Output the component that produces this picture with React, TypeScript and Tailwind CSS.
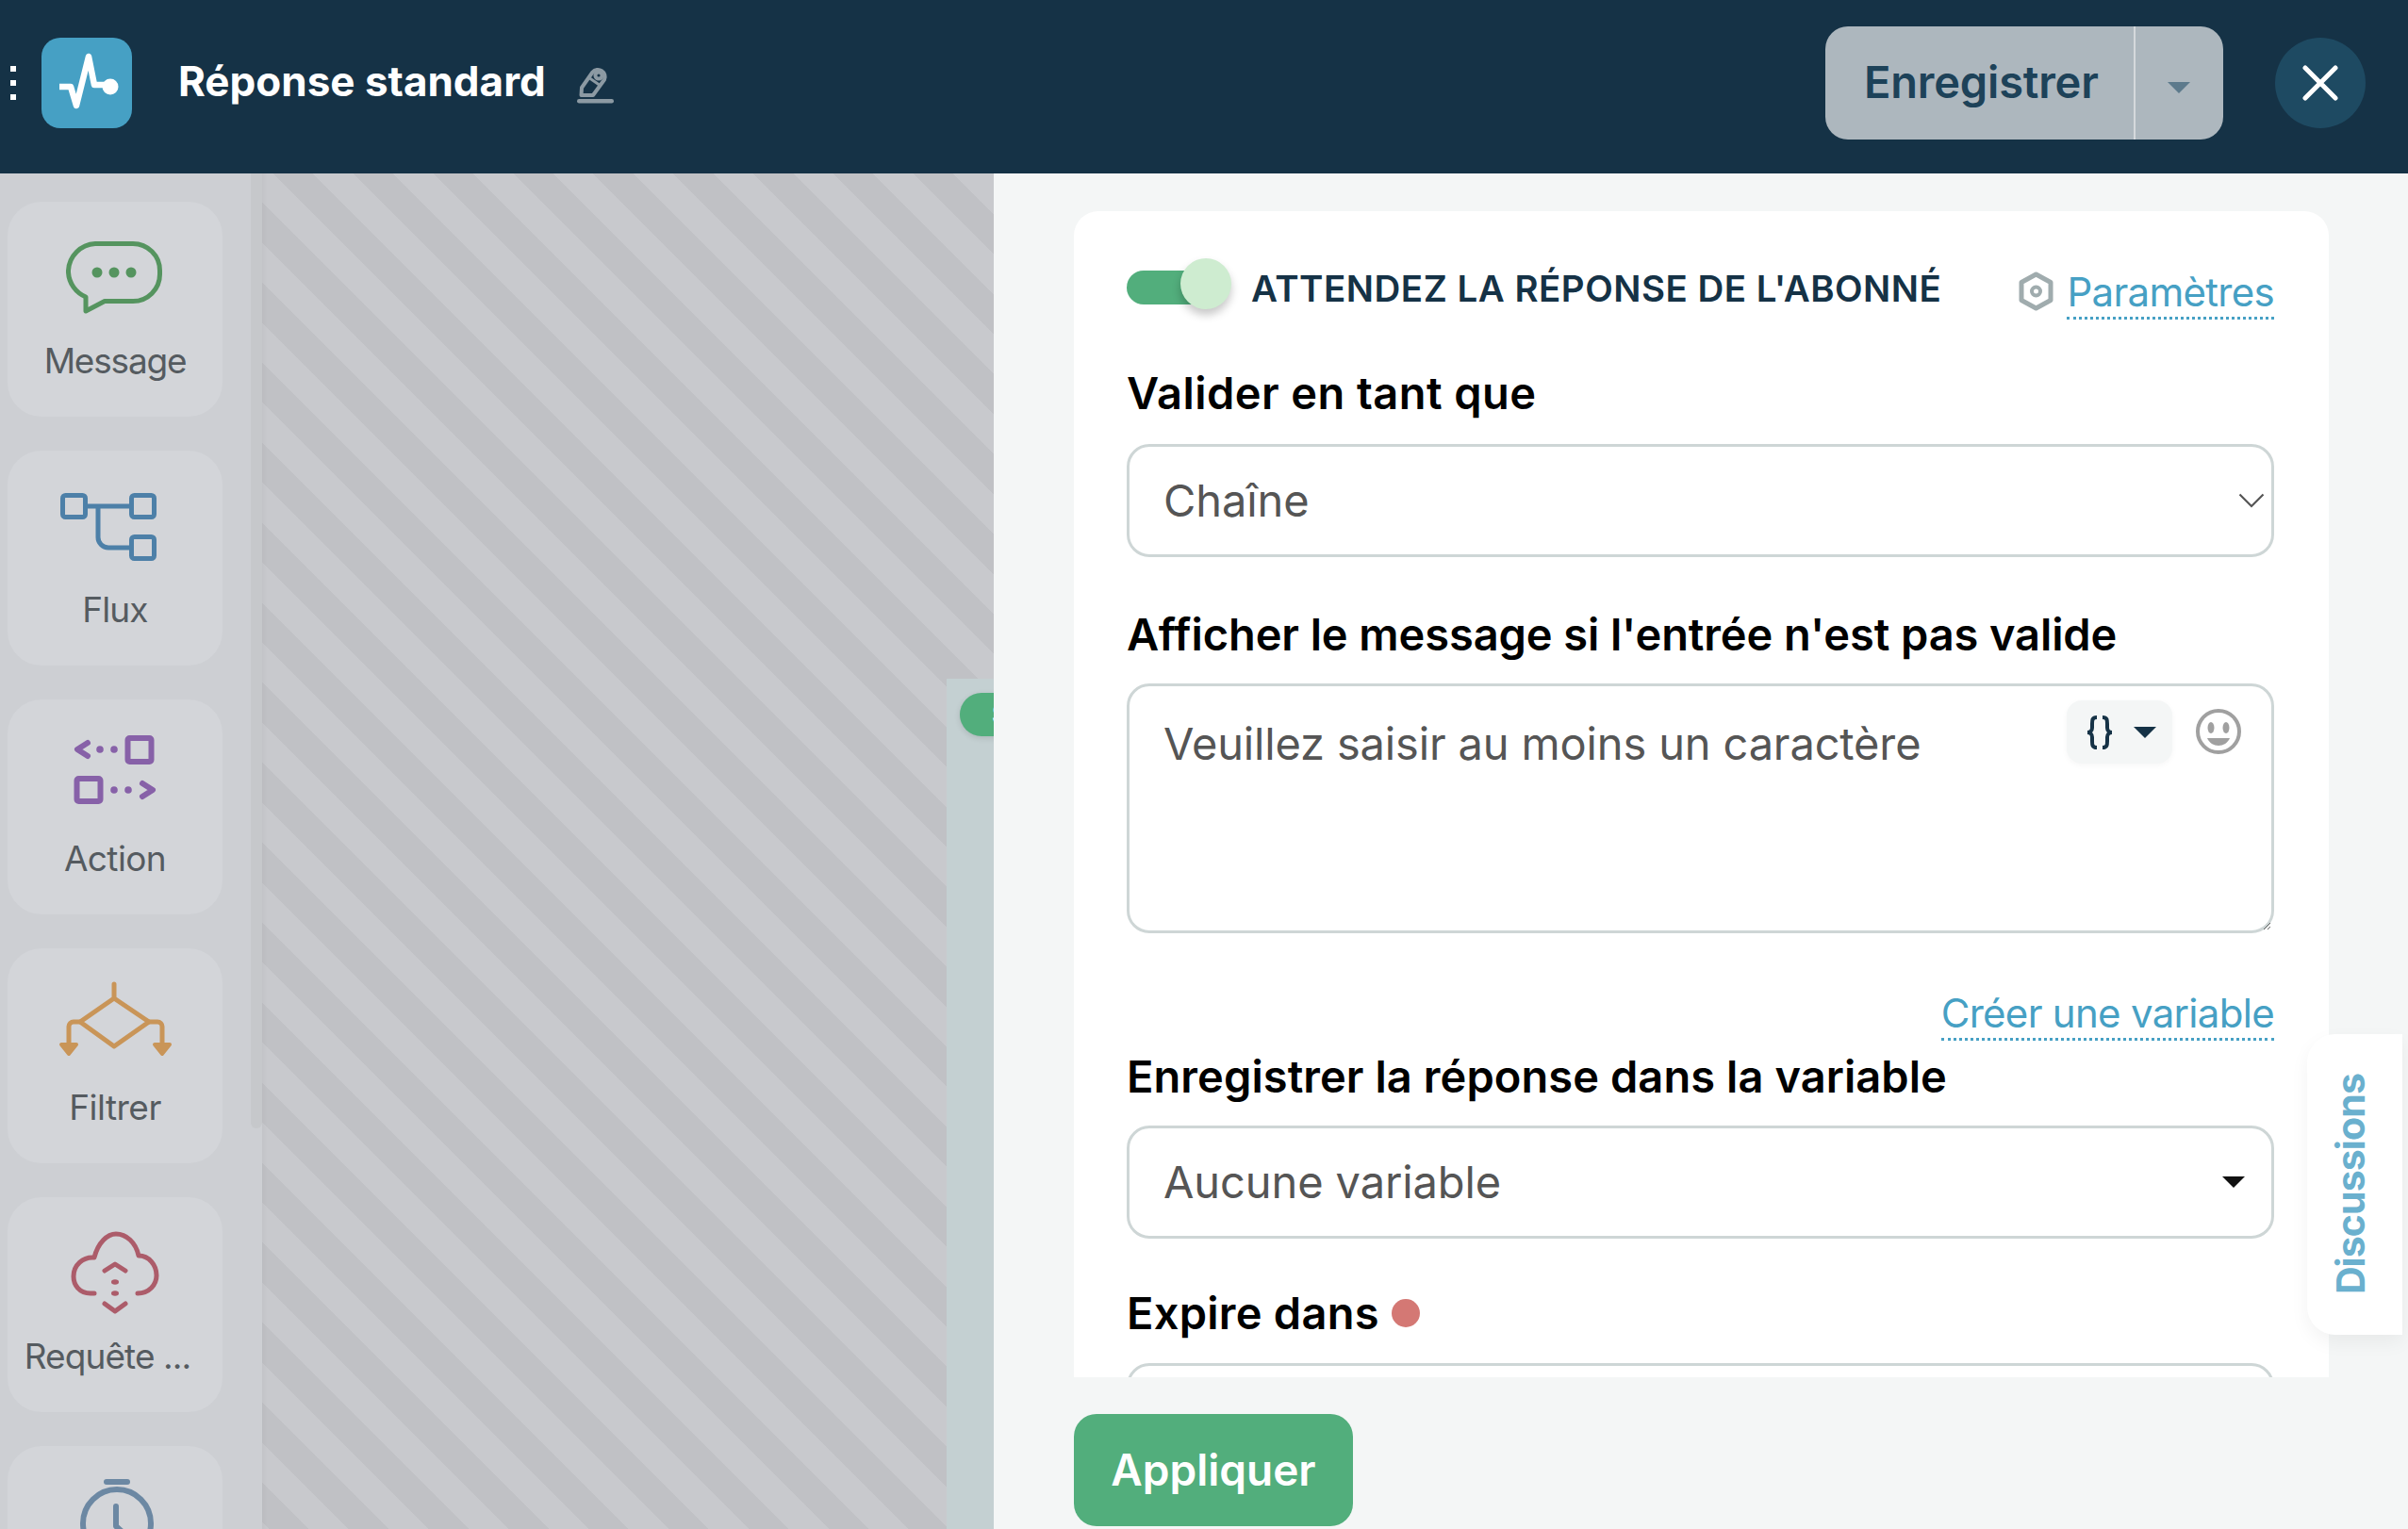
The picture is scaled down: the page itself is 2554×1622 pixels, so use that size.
import React from "react";

const font = { fontFamily: "Inter, 'Liberation Sans', sans-serif" };

function Cardicon({ children, label, labelClass }: { children: React.ReactNode; label?: string; labelClass?: string }) {
  return (
    <div className="w-[228px] h-[228px] shrink-0 rounded-[36px] bg-[#d3d5d9] flex flex-col items-center">
      <svg width="228" height="140" viewBox="0 0 228 140" fill="none" className="block shrink-0">
        {children}
      </svg>
      {label ? <div className={"h-[58px] leading-[58px] text-[37px] text-[#555b60] " + (labelClass || "tracking-[-0.9px]")}>{label}</div> : null}
    </div>
  );
}

const FieldLabel = ({ children, className }: { children: React.ReactNode; className?: string }) => (
  <div className={"h-[60px] leading-[60px] text-[47px] font-semibold text-black whitespace-nowrap " + (className || "")}>{children}</div>
);

const boxCls = "w-full h-[120px] border-[3px] border-[#ced6d6] rounded-[24px] bg-white flex items-center justify-between pl-[36px] pr-[24px] text-[47px] text-[#555555] tracking-[-0.1px]";

export default function App() {
  return (
    <div style={font} className="w-[2554px] h-[1622px] overflow-hidden flex flex-col bg-white">
      <header className="h-[184px] shrink-0 bg-[#153246] flex items-center relative">
        <div className="w-[44px] flex flex-col items-center gap-[9px] -mt-[8px] shrink-0 pr-[16px]">
          <span className="w-[6px] h-[6px] bg-white"></span>
          <span className="w-[6px] h-[6px] bg-white"></span>
          <span className="w-[6px] h-[6px] bg-white"></span>
        </div>
        <div className="w-[96px] h-[96px] rounded-[20px] bg-[#46a0c4] -mt-[8px] shrink-0">
          <svg width="96" height="96" viewBox="0 0 96 96" fill="none">
            <path d="M19 52H31L37 72L50 20L56 50H73" stroke="#fff" strokeWidth="6.5" strokeLinejoin="round" />
            <circle cx="73" cy="52" r="8.5" fill="#fff" />
          </svg>
        </div>
        <div className="ml-[49px] w-[389px] text-[44px] font-bold text-white tracking-[0px] -mt-[12px] whitespace-nowrap">Réponse standard</div>
        <svg width="39" height="40" viewBox="0 0 39 40" fill="none" className="ml-[34px] -mt-[4px] shrink-0">
          <path d="M4.5 31L5 23L16.5 6.5A7.5 7.5 0 0 1 29 14.5L17 31Z" stroke="#8c9aa3" strokeWidth="4" strokeLinejoin="round" />
          <circle cx="23" cy="10" r="3.6" stroke="#8c9aa3" strokeWidth="4" />
          <path d="M13.5 13L25 21" stroke="#8c9aa3" strokeWidth="3" />
          <rect x="0" y="35" width="39" height="4.5" rx="2.2" fill="#8c9aa3" />
        </svg>
        <div className="ml-auto flex items-center shrink-0 -mt-[8px] pr-[45px]">
          <div className="w-[422px] h-[120px] rounded-[24px] bg-[#adb7be] flex items-stretch">
            <div className="w-[327px] pl-[41px] flex items-center text-[47px] font-semibold text-[#1d4259] tracking-[-0.2px] -mt-[2px]">Enregistrer</div>
            <div className="w-[2px] bg-[#d5d9dc]"></div>
            <div className="flex-1 flex items-center justify-center pt-[10px] pr-[2px]">
              <svg width="24" height="12" viewBox="0 0 24 12"><path d="M0 0H24L12 12Z" fill="#5d7a8c" /></svg>
            </div>
          </div>
          <div className="ml-[55px] w-[96px] h-[96px] rounded-full bg-[#1e4a62] flex items-center justify-center">
            <svg width="38" height="38" viewBox="0 0 38 38" fill="none">
              <path d="M3 3L35 35M35 3L3 35" stroke="#fff" strokeWidth="5" strokeLinecap="round" />
            </svg>
          </div>
        </div>
      </header>

      <div className="flex-1 flex min-h-0">
        <aside className="w-[278px] shrink-0 bg-[#cdcfd3] relative overflow-hidden pt-[30px] pl-[8px] flex flex-col gap-[36px]">
          <Cardicon label="Message" labelClass="tracking-[-1.2px]">
            <path d="M93 44.5h40a28.5 28.5 0 0 1 28.5 28.5v4a28.5 28.5 0 0 1-28.5 28.5h-30l-20 10.5v-15a30 30 0 0 1-18.5-26v-2a30 30 0 0 1 28.5-28.5z" stroke="#55945f" strokeWidth="5" strokeLinejoin="round" />
            <circle cx="95" cy="75" r="5.5" fill="#55945f" />
            <circle cx="113" cy="75" r="5.5" fill="#55945f" />
            <circle cx="131" cy="75" r="5.5" fill="#55945f" />
          </Cardicon>
          <Cardicon label="Flux">
            <g stroke="#4d80a8" strokeWidth="5" strokeLinejoin="round">
              <rect x="58.5" y="47.5" width="24" height="23" rx="3" />
              <rect x="131.5" y="47.5" width="24" height="23" rx="3" />
              <rect x="131.5" y="91.5" width="24" height="23" rx="3" />
              <path d="M82.5 59H131.5M96 59V92a11 11 0 0 0 11 11H131.5" />
            </g>
          </Cardicon>
          <Cardicon label="Action" labelClass="tracking-[-0.6px]">
            <g stroke="#8761a8" strokeWidth="6" strokeLinejoin="round" strokeLinecap="round">
              <rect x="127.5" y="41" width="25" height="25" rx="2" />
              <rect x="73.5" y="84" width="25" height="24" rx="2" />
              <path d="M85 46L74 53L85 60M143 89L154 96L143 103" />
            </g>
            <g fill="#8761a8">
              <circle cx="98" cy="53" r="3.8" />
              <circle cx="113" cy="53" r="3.8" />
              <circle cx="113" cy="96" r="3.8" />
              <circle cx="128" cy="96" r="3.8" />
            </g>
          </Cardicon>
          <Cardicon label="Filtrer" labelClass="tracking-[-0.5px]">
            <g stroke="#c99558" strokeWidth="5" strokeLinejoin="round" strokeLinecap="round">
              <path d="M113 38V53M113 53L150 78L113 104L77 78Z" />
              <path d="M77 78H70a5 5 0 0 0-5 5V103M150 78H159a5 5 0 0 1 5 5V103" />
            </g>
            <path d="M57 102H73L65 112ZM156 102H172L164 112Z" fill="#c99558" stroke="#c99558" strokeWidth="4" strokeLinejoin="round" />
          </Cardicon>
          <Cardicon label="Requête ..." labelClass="-ml-[16px] tracking-[-0.9px]">
            <g stroke="#ac5c6a" strokeWidth="5" strokeLinecap="round" strokeLinejoin="round">
              <path d="M92 102H88C76 102 70 93 70 84C70 72 80 63 92 64C96 48 106 39 115 39C126 39 136 48 139 62C150 62 158 72 158 83C158 93 150 102 138 102" />
              <path d="M103 78L114 71L125 78M103 113L114 121L125 113" />
            </g>
            <ellipse cx="114" cy="90" rx="4" ry="2.8" fill="#ac5c6a" />
            <ellipse cx="114" cy="102" rx="4" ry="2.8" fill="#ac5c6a" />
          </Cardicon>
          <Cardicon>
            <g stroke="#6c88a3" strokeWidth="6" strokeLinecap="round" strokeLinejoin="round">
              <path d="M105 38H127" />
              <circle cx="116" cy="82" r="36" />
              <path d="M115 64V85L126 95" />
            </g>
          </Cardicon>
          <div className="absolute left-[266px] top-0 w-[12px] h-[1013px] rounded-b-[6px] bg-[#c6c8cb]"></div>
        </aside>

        <main className="w-[776px] shrink-0 relative overflow-hidden bg-[repeating-linear-gradient(45deg,#c0c1c5_5px,#c0c1c5_35px,#c8c9cd_35px,#c8c9cd_65px)] shadow-[inset_5px_0_4px_-3px_rgba(0,0,0,0.03)]">
          <div className="absolute left-[726px] top-[536px] w-[200px] h-[1000px] bg-[#c4d0d2]">
            <div className="ml-[14px] mt-[15px] w-[120px] h-[46px] rounded-[23px] bg-[#52ae7c] pl-[34px] text-[28px] leading-[46px] font-bold text-white shadow-[0_2px_6px_rgba(0,0,0,0.12)]">S</div>
          </div>
        </main>

        <section className="flex-1 bg-[#f4f6f6] relative pl-[85px] pt-[40px] min-w-0">
          <div className="w-[1331px] h-[1237px] bg-white rounded-t-[26px] overflow-hidden pl-[56px] pr-[58px]">
            <div className="pt-[50px] h-[106px] flex items-start justify-between">
              <div className="flex items-center h-[56px]">
                <div className="relative w-[111px] h-[56px] shrink-0">
                  <div className="absolute left-0 top-[13px] w-[72px] h-[36px] rounded-l-[18px] bg-[#52ae7c]"></div>
                  <div className="absolute left-[57px] top-0 w-[54px] h-[54px] rounded-full bg-[#ceecd0] shadow-[0_6px_10px_rgba(0,0,0,0.22)]"></div>
                </div>
                <div className="ml-[21px] text-[38.5px] font-semibold text-[#153246] tracking-[0.5px] mt-[10px] whitespace-nowrap">ATTENDEZ LA RÉPONSE DE L'ABONNÉ</div>
              </div>
              <div className="flex items-start mt-[14px]">
                <svg width="37" height="42" viewBox="0 0 37 42" fill="none" className="mr-[14px] shrink-0">
                  <path d="M18.5 3L34 11.5V30.5L18.5 39L3 30.5V11.5Z" stroke="#a0acae" strokeWidth="5" strokeLinejoin="round" />
                  <circle cx="18.5" cy="21" r="4.5" stroke="#a0acae" strokeWidth="4" />
                </svg>
                <div className="text-[42px] leading-[44px] h-[51px] text-[#46a0c4] border-b-[3px] border-dotted border-[#46a0c4] tracking-[-0.7px] whitespace-nowrap">Paramètres</div>
              </div>
            </div>

            <FieldLabel className="mt-[57px] tracking-[0.45px]">Valider en tant que</FieldLabel>
            <div className={boxCls + " mt-[24px]"}>
              <span>Chaîne</span>
              <svg width="28" height="16" viewBox="0 0 28 16" fill="none" className="-mr-[17px]"><path d="M1.5 1.5L14 14L26.5 1.5" stroke="#555" strokeWidth="2.2" /></svg>
            </div>

            <FieldLabel className="mt-[52px] tracking-[-0.1px]">Afficher le message si l'entrée n'est pas valide</FieldLabel>
            <div className="relative mt-[22px] h-[265px]">
              <textarea
                readOnly
                defaultValue="Veuillez saisir au moins un caractère"
                className="block w-full h-[265px] border-[3px] border-[#ced6d6] rounded-[24px] bg-white pl-[36px] pr-[240px] pt-[31px] text-[47px] leading-[60px] text-[#555555] tracking-[-0.15px] outline-none resize-y"
              />
              <div className="absolute left-[997px] top-[18px] w-[112px] h-[67px] rounded-[16px] bg-[#f4f6f6] shadow-[0_2px_6px_rgba(0,0,0,0.04)] flex items-center pl-[19px] gap-[20px]">
                <svg width="32" height="36" viewBox="0 0 32 36" fill="none">
                  <path d="M13 2C8 2 8 5 8 9V13C8 16 6 18 3 18C6 18 8 20 8 23V27C8 31 8 34 13 34M19 2C24 2 24 5 24 9V13C24 16 26 18 29 18C26 18 24 20 24 23V27C24 31 24 34 19 34" stroke="#153246" strokeWidth="4" />
                </svg>
                <svg width="24" height="12" viewBox="0 0 24 12"><path d="M0 0H24L12 12Z" fill="#153246" /></svg>
              </div>
              <svg width="48" height="48" viewBox="0 0 48 48" fill="none" className="absolute left-[1134px] top-[27px]">
                <circle cx="24" cy="24" r="22" stroke="#a0a0a0" strokeWidth="4" />
                <ellipse cx="16" cy="20" rx="3.5" ry="6" fill="#a0a0a0" />
                <ellipse cx="32" cy="20" rx="3.5" ry="6" fill="#a0a0a0" />
                <path d="M12 31H36C34 36 29 39 24 39C19 39 14 36 12 31Z" fill="#a0a0a0" />
              </svg>
            </div>

            <div className="mt-[54px] h-[60px] flex justify-end">
              <div className="text-[42px] leading-[62px] h-[60px] text-[#46a0c4] border-b-[3px] border-dotted border-[#46a0c4] tracking-[-0.7px] whitespace-nowrap">Créer une variable</div>
            </div>
            <FieldLabel className="mt-[8px] tracking-[0.07px]">Enregistrer la réponse dans la variable</FieldLabel>
            <div className={boxCls + " mt-[22px]"}>
              <span>Aucune variable</span>
              <svg width="24" height="12" viewBox="0 0 24 12" className="mr-[4px]"><path d="M0 0H24L12 12Z" fill="#111" /></svg>
            </div>

            <div className="mt-[49px] flex items-center gap-[13px]">
              <FieldLabel className="tracking-[0.25px]">Expire dans</FieldLabel>
              <span className="w-[30px] h-[30px] rounded-full bg-[#d47874]"></span>
            </div>
            <div className={boxCls + " mt-[23px]"}></div>
          </div>

          <button className="block mt-[39px] w-[296px] h-[119px] rounded-[24px] bg-[#52ae7c] text-[46px] font-semibold text-white tracking-[0px]">Appliquer</button>

          <div className="absolute left-[1393px] top-[913px] w-[101px] h-[319px] bg-white rounded-l-[30px] shadow-[0_8px_20px_rgba(0,0,0,0.05)] flex items-center justify-center">
            <span className="[writing-mode:vertical-rl] rotate-180 text-[41px] font-bold text-[#6ab0ce] tracking-[-0.9px] pl-[8px]">Discussions</span>
          </div>
        </section>
      </div>
    </div>
  );
}
